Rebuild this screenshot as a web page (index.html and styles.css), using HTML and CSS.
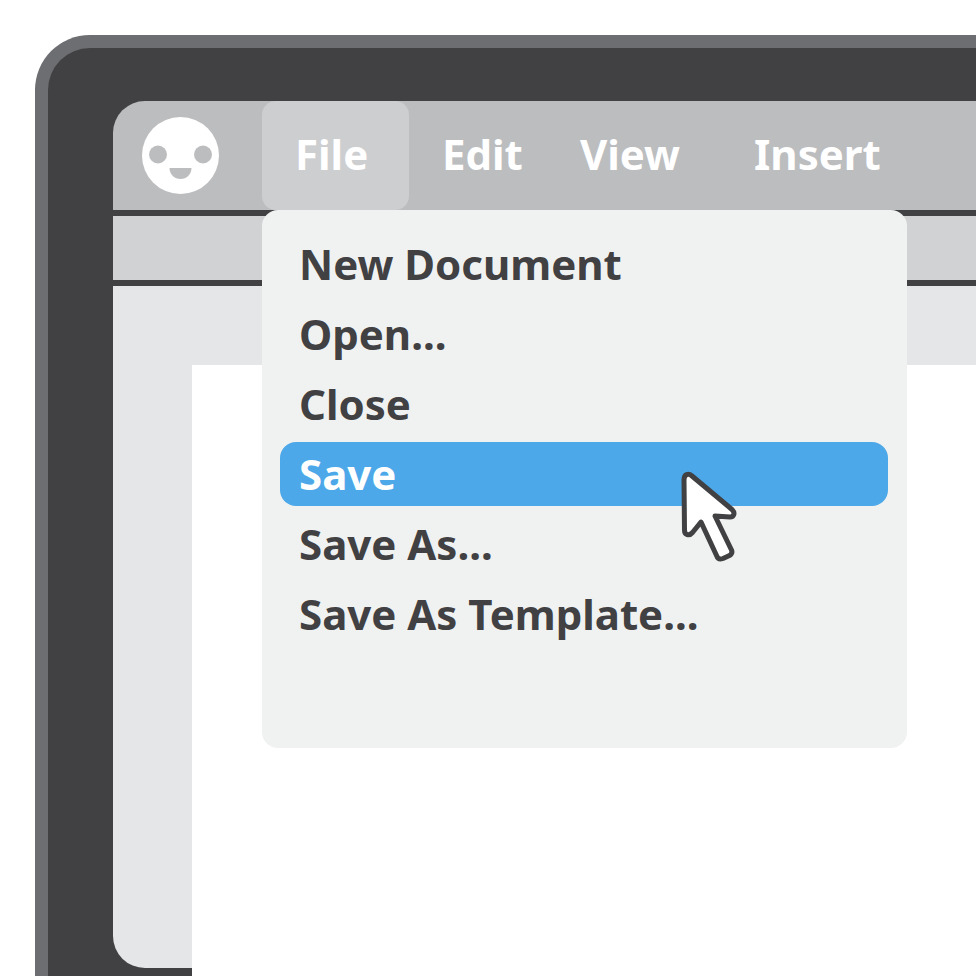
FILE: index.html
```html
<!DOCTYPE html>
<html lang="en">
<head>
    <meta charset="UTF-8">
    <title>Document Editor</title>
    <link rel="stylesheet" href="styles.css">
</head>
<body>
    <div class="monitor">
        <div class="screen">
            <!-- Menu Bar -->
            <header class="menu-bar">
                <svg class="logo" viewBox="0 0 77 77" aria-hidden="true">
                    <circle cx="38.5" cy="38.5" r="38.5" fill="#fff"/>
                    <circle cx="16" cy="37.5" r="9" fill="#bcbdbf"/>
                    <circle cx="61" cy="37.5" r="9" fill="#bcbdbf"/>
                    <path d="M27.5 51H49.5C49.5 57.5 44.5 62 38.5 62S27.5 57.5 27.5 51Z" fill="#bcbdbf"/>
                </svg>
                <nav class="menus">
                    <button class="menu-btn active" type="button">File</button>
                    <button class="menu-btn" type="button">Edit</button>
                    <button class="menu-btn" type="button">View</button>
                    <button class="menu-btn" type="button">Insert</button>

                    <!-- File Dropdown -->
                    <div class="dropdown">
                        <button class="item" type="button">New Document</button>
                        <button class="item" type="button">Open...</button>
                        <button class="item" type="button">Close</button>
                        <button class="item selected" type="button">Save</button>
                        <button class="item" type="button">Save As...</button>
                        <button class="item" type="button">Save As Template...</button>
                        <svg class="cursor" viewBox="0 0 66 100" aria-hidden="true">
                            <path d="M8 14C8 8 12.500 7 16 10L56 43.500C59.500 47 58 51 54 51L39 50L55.500 84C56.500 86.500 56 88 53.500 89.500L47 92.500C44 93.500 42 93 41 90.500L25 56L16.500 66.500C13 70.500 8.500 69 8.500 64Z" fill="#fff" stroke="#414042" stroke-width="5" stroke-linejoin="round"/>
                        </svg>
                    </div>
                </nav>
            </header>

            <div class="toolbar"></div>

            <!-- Document Area -->
            <main class="workspace">
                <div class="paper"></div>
            </main>
        </div>
    </div>
</body>
</html>
```
FILE: styles.css
```css
* {
    box-sizing: border-box;
}

body {
    margin: 0;
    height: 100vh;
    padding: 35px 0 0 35px;
    display: flex;
    background-color: #fff;
    font-family: 'Noto Sans', sans-serif;
    overflow: hidden;
}

.monitor {
    flex: 1;
    display: flex;
    padding: 53px 0 8px 65px;
    background-color: #414042;
    border: solid #6d6e71;
    border-width: 13px 0 0 13px;
    border-radius: 55px 0 0 0;
}

.screen {
    flex: 1;
    display: flex;
    flex-direction: column;
    gap: 6px;
}

.menu-bar {
    display: flex;
    align-items: center;
    gap: 43px;
    height: 109px;
    padding-left: 29px;
    background-color: #bcbdbf;
    border-radius: 32px 0 0 0;
}

.logo {
    width: 77px;
    height: 77px;
}

.menus {
    position: relative;
    display: grid;
    grid-template-columns: 147px 138px 174px auto;
    height: 100%;
}

button {
    border: none;
    background: none;
    font-family: inherit;
    font-size: 42px;
    font-weight: bold;
    text-align: left;
    white-space: nowrap;
    cursor: pointer;
}

.menu-btn {
    padding: 0 0 4px 33px;
    color: #fff;
    border-radius: 14px;
}

.menu-btn.active {
    background-color: #cdced0;
}

.dropdown {
    position: absolute;
    top: 100%;
    left: 0;
    z-index: 1;
    display: flex;
    flex-direction: column;
    gap: 6px;
    width: 645px;
    padding: 22px 19px 102px 18px;
    background-color: #f0f2f1;
    border-radius: 16px;
}

.item {
    height: 64px;
    padding: 0 19px 2px;
    color: #414042;
    border-radius: 16px;
}

.item.selected {
    background-color: #4ca8e8;
    color: #fff;
}

.cursor {
    position: absolute;
    top: 256px;
    left: 414px;
    width: 66px;
    height: 100px;
    pointer-events: none;
}

.toolbar {
    height: 64px;
    background-color: #d1d2d4;
}

.workspace {
    flex: 1;
    display: flex;
    padding: 79px 0 0 79px;
    background-color: #e5e6e8;
    border-radius: 0 0 0 32px;
}

/* the page runs past the bottom edge of the screen */
.paper {
    flex: 1;
    margin-bottom: -8px;
    background-color: #fff;
}
```
